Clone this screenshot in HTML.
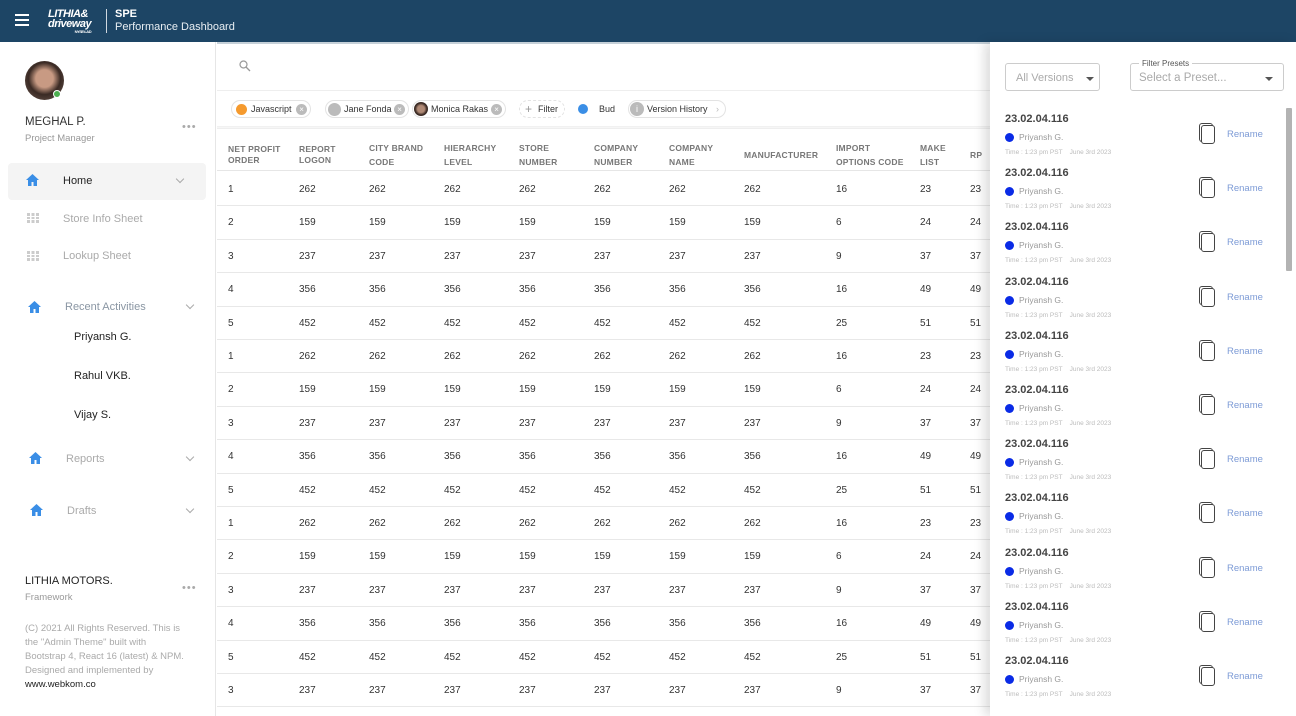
<!DOCTYPE html>
<html><head><meta charset="utf-8">
<style>
*{box-sizing:border-box;margin:0;padding:0}
body{width:1296px;height:716px;overflow:hidden;font-family:"Liberation Sans",Arial,sans-serif;background:#fff;position:relative;color:#333}
.hdr{position:absolute;left:0;top:0;width:1296px;height:42px;background:#1d4565;color:#fff}
.ham{position:absolute;left:15px;top:14px;width:14px}
.ham i{display:block;height:2px;background:#fff;margin-bottom:3px}
.logo{position:absolute;left:48px;top:9px;font-weight:bold;font-size:11px;line-height:10px;font-style:italic;letter-spacing:-.5px}
.logo small{display:block;font-size:4px;text-align:right;line-height:5px;font-style:normal}
.sep{position:absolute;left:106px;top:9px;width:1px;height:24px;background:#cfd8e0}
.spe{position:absolute;left:115px;top:8px;font-size:11px;font-weight:bold}
.pd{position:absolute;left:115px;top:21px;font-size:11px;color:#e8eef3}
.side{position:absolute;left:0;top:42px;width:216px;height:674px;border-right:1px solid #e6e6e6}
.av{position:absolute;left:25px;top:19px;width:39px;height:39px;border-radius:50%;background:radial-gradient(circle at 50% 45%,#c89a83 0 30%,#3a2a24 55%,#6e5a52 100%)}
.dot{position:absolute;left:53px;top:48px;width:8px;height:8px;border-radius:50%;background:#4caf50;border:1.5px solid #fff}
.t{position:absolute;white-space:nowrap}
.dots{position:absolute;color:#aaa;font-size:11px;letter-spacing:1px}
.home{position:absolute;left:8px;top:121px;width:198px;height:37px;background:#f4f4f4;border-radius:4px}
.hi{position:absolute;width:13px;height:12px}
.grid{position:absolute;width:12px;height:10px;background:
linear-gradient(90deg,#ccc 3px,transparent 3px 4.5px,#ccc 4.5px 7.5px,transparent 7.5px 9px,#ccc 9px);}
.grid:after{content:"";position:absolute;left:0;right:0;top:3px;height:1px;background:#fff;box-shadow:0 3px 0 #fff}
.chev{position:absolute;width:6px;height:6px;border-right:1.2px solid #aaa;border-bottom:1.2px solid #aaa;transform:rotate(45deg)}
.main{position:absolute;left:217px;top:42px;width:780px;height:674px}
.chip{position:absolute;top:58px;height:18px;border:1px solid #e3e3e3;border-radius:9px;font-size:9px;color:#333;line-height:16px}
.x{position:absolute;top:3px;width:11px;height:11px;border-radius:50%;background:#bbb;color:#fff;font-size:8px;line-height:11px;text-align:center}
.row{position:absolute;left:0;width:780px;height:33.4px;border-bottom:1px solid #e8e8e8;font-size:10px;color:#333;margin-top:2px}
.row span{position:absolute;top:0;line-height:33px}
.hrow{position:absolute;left:0;top:86px;width:780px;height:43px;border-bottom:1px solid #e6e6e6;border-top:1px solid #eee;font-size:8.5px;font-weight:bold;color:#777;letter-spacing:.2px}
.hrow span{position:absolute;line-height:14px;top:12px}
.hrow span.tt{line-height:11px;top:15px}
.hrow span.one{top:19px}
.c1{left:11px}.c2{left:82px}.c3{left:152px}.c4{left:227px}.c5{left:302px}.c6{left:377px}.c7{left:452px}.c8{left:527px}.c9{left:619px}.c10{left:703px}.c11{left:753px}
.panel{position:absolute;left:990px;top:42px;width:306px;height:674px;background:#fff;box-shadow:-6px 0 10px rgba(0,0,0,.13)}
.sel{position:absolute;border:1px solid #ccc;border-radius:3px;height:28px;font-size:11px;color:#aaa}
.tri{position:absolute;width:0;height:0;border-left:4px solid transparent;border-right:4px solid transparent;border-top:4px solid #555}
.it{position:absolute;left:0;width:290px;height:54px}
.it .v{position:absolute;left:15px;top:0;font-size:11px;font-weight:bold;color:#444}
.it .b{position:absolute;left:15px;top:20px;width:9px;height:9px;border-radius:50%;background:#0a2be6}
.it .n{position:absolute;left:29px;top:19px;font-size:8.5px;color:#999}
.it .tm{position:absolute;left:15px;top:36px;font-size:6.5px;color:#bbb}
.it .cp{position:absolute;left:211px;top:12px;width:14px;height:19px;border:1px solid #444;border-radius:3px;background:#fff;box-shadow:-2px -2px 0 -1px #fff,-2px -2px 0 0 #444}
.it .rn{position:absolute;left:237px;top:16px;font-size:9.5px;color:#7d9bd6}
.sb{position:absolute;left:1286px;top:108px;width:6px;height:163px;background:#b3b3b3;border-radius:1px}
</style></head><body>
<div class="hdr">
<div class="ham"><i></i><i></i><i></i></div>
<div class="logo">LITHIA&amp;<br>driveway<small>NYSE:LAD</small></div>
<div class="sep"></div>
<div class="spe">SPE</div>
<div class="pd">Performance Dashboard</div>
</div>

<div class="side">
<div class="av"></div><div class="dot"></div>
<div class="t" style="left:25px;top:74px;font-size:11.5px;color:#333">MEGHAL P.</div>
<div class="t" style="left:25px;top:91px;font-size:9.5px;color:#999">Project Manager</div>
<div class="dots" style="left:182px;top:79px">•••</div>
<div class="home"></div>
<svg class="hi" style="left:26px;top:132px" viewBox="0 0 13 12"><path d="M6.5 0L0 6h2v6h3.5V8h2v4H11V6h2z" fill="#3a8ee6"/></svg>
<div class="t" style="left:63px;top:133px;font-size:11px;color:#222">Home</div>
<div class="chev" style="left:177px;top:134px"></div>
<div class="grid" style="left:27px;top:171px"></div>
<div class="t" style="left:63px;top:171px;font-size:11px;color:#aaa">Store Info Sheet</div>
<div class="grid" style="left:27px;top:209px"></div>
<div class="t" style="left:63px;top:208px;font-size:11px;color:#aaa">Lookup Sheet</div>
<svg class="hi" style="left:28px;top:259px" viewBox="0 0 13 12"><path d="M6.5 0L0 6h2v6h3.5V8h2v4H11V6h2z" fill="#3a8ee6"/></svg>
<div class="t" style="left:65px;top:259px;font-size:11px;color:#8a96a3">Recent Activities</div>
<div class="chev" style="left:187px;top:260px"></div>
<div class="t" style="left:74px;top:289px;font-size:11px;color:#222">Priyansh G.</div>
<div class="t" style="left:74px;top:328px;font-size:11px;color:#222">Rahul VKB.</div>
<div class="t" style="left:74px;top:367px;font-size:11px;color:#222">Vijay S.</div>
<svg class="hi" style="left:29px;top:410px" viewBox="0 0 13 12"><path d="M6.5 0L0 6h2v6h3.5V8h2v4H11V6h2z" fill="#3a8ee6"/></svg>
<div class="t" style="left:66px;top:411px;font-size:11px;color:#aaa">Reports</div>
<div class="chev" style="left:187px;top:412px"></div>
<svg class="hi" style="left:30px;top:462px" viewBox="0 0 13 12"><path d="M6.5 0L0 6h2v6h3.5V8h2v4H11V6h2z" fill="#3a8ee6"/></svg>
<div class="t" style="left:67px;top:463px;font-size:11px;color:#aaa">Drafts</div>
<div class="chev" style="left:187px;top:464px"></div>
<div class="t" style="left:25px;top:533px;font-size:11px;color:#222">LITHIA MOTORS.</div>
<div class="t" style="left:25px;top:550px;font-size:9.5px;color:#999">Framework</div>
<div class="dots" style="left:182px;top:540px">•••</div>
<div class="t" style="left:25px;top:580px;font-size:9.5px;color:#aaa;line-height:14px">(C) 2021 All Rights Reserved. This is<br>the "Admin Theme" built with<br>Bootstrap 4, React 16 (latest) &amp; NPM.<br>Designed and implemented by<br><span style="color:#222">www.webkom.co</span></div>
</div>

<div class="main">
<div style="position:absolute;left:0;top:0;width:780px;height:2px;background:#c5d0d8"></div>
<svg style="position:absolute;left:22px;top:18px" width="12" height="12" viewBox="0 0 12 12"><circle cx="4.5" cy="4.5" r="3.5" fill="none" stroke="#999" stroke-width="1.2"/><path d="M7 7l4 4" stroke="#999" stroke-width="1.3"/></svg>
<div style="position:absolute;left:0;top:48px;width:780px;height:1px;background:#eee"></div>
<div class="chip" style="left:14px;width:80px"><i style="position:absolute;left:4px;top:3px;width:11px;height:11px;border-radius:50%;background:#f59a2e"></i><span style="position:absolute;left:19px">Javascript</span><i class="x" style="left:64px">×</i></div>
<div class="chip" style="left:108px;width:84px"><i style="position:absolute;left:2px;top:2px;width:13px;height:13px;border-radius:50%;background:#bbb"></i><span style="position:absolute;left:18px">Jane Fonda</span><i class="x" style="left:68px">×</i></div>
<div class="chip" style="left:195px;width:94px"><i style="position:absolute;left:1px;top:1px;width:14px;height:14px;border-radius:50%;background:radial-gradient(circle,#b08a76 0 35%,#3a2a24 60%)"></i><span style="position:absolute;left:18px">Monica Rakas</span><i class="x" style="left:78px">×</i></div>
<div class="chip" style="left:302px;width:46px;border-style:dashed"><span style="position:absolute;left:5px;color:#999;font-size:12px">+</span><span style="position:absolute;left:18px">Filter</span></div>
<i style="position:absolute;left:361px;top:62px;width:10px;height:10px;border-radius:50%;background:#3a8ee6"></i>
<div class="t" style="left:382px;top:62px;font-size:9px">Bud</div>
<div class="chip" style="left:411px;width:98px"><i style="position:absolute;left:1px;top:1px;width:14px;height:14px;border-radius:50%;background:#bbb;color:#fff;font-size:9px;text-align:center;line-height:14px;font-style:normal">i</i><span style="position:absolute;left:18px">Version History</span><span style="position:absolute;left:87px;color:#bbb">›</span></div>
<div style="position:absolute;left:0;top:84px;width:780px;height:3px;background:linear-gradient(#eee,#fff)"></div>
<div class="hrow"><span class="c1 tt">NET PROFIT<br>ORDER</span><span class="c2 tt">REPORT<br>LOGON</span><span class="c3">CITY BRAND<br>CODE</span><span class="c4">HIERARCHY<br>LEVEL</span><span class="c5">STORE<br>NUMBER</span><span class="c6">COMPANY<br>NUMBER</span><span class="c7">COMPANY<br>NAME</span><span class="c8 one">MANUFACTURER</span><span class="c9">IMPORT<br>OPTIONS CODE</span><span class="c10">MAKE<br>LIST</span><span class="c11 one">RP</span></div>
<div class="row" style="top:129px"><span class="c1">1</span><span class="c2">262</span><span class="c3">262</span><span class="c4">262</span><span class="c5">262</span><span class="c6">262</span><span class="c7">262</span><span class="c8">262</span><span class="c9">16</span><span class="c10">23</span><span class="c11">23</span></div>
<div class="row" style="top:162.4px"><span class="c1">2</span><span class="c2">159</span><span class="c3">159</span><span class="c4">159</span><span class="c5">159</span><span class="c6">159</span><span class="c7">159</span><span class="c8">159</span><span class="c9">6</span><span class="c10">24</span><span class="c11">24</span></div>
<div class="row" style="top:195.8px"><span class="c1">3</span><span class="c2">237</span><span class="c3">237</span><span class="c4">237</span><span class="c5">237</span><span class="c6">237</span><span class="c7">237</span><span class="c8">237</span><span class="c9">9</span><span class="c10">37</span><span class="c11">37</span></div>
<div class="row" style="top:229.2px"><span class="c1">4</span><span class="c2">356</span><span class="c3">356</span><span class="c4">356</span><span class="c5">356</span><span class="c6">356</span><span class="c7">356</span><span class="c8">356</span><span class="c9">16</span><span class="c10">49</span><span class="c11">49</span></div>
<div class="row" style="top:262.6px"><span class="c1">5</span><span class="c2">452</span><span class="c3">452</span><span class="c4">452</span><span class="c5">452</span><span class="c6">452</span><span class="c7">452</span><span class="c8">452</span><span class="c9">25</span><span class="c10">51</span><span class="c11">51</span></div>
<div class="row" style="top:296px"><span class="c1">1</span><span class="c2">262</span><span class="c3">262</span><span class="c4">262</span><span class="c5">262</span><span class="c6">262</span><span class="c7">262</span><span class="c8">262</span><span class="c9">16</span><span class="c10">23</span><span class="c11">23</span></div>
<div class="row" style="top:329.4px"><span class="c1">2</span><span class="c2">159</span><span class="c3">159</span><span class="c4">159</span><span class="c5">159</span><span class="c6">159</span><span class="c7">159</span><span class="c8">159</span><span class="c9">6</span><span class="c10">24</span><span class="c11">24</span></div>
<div class="row" style="top:362.8px"><span class="c1">3</span><span class="c2">237</span><span class="c3">237</span><span class="c4">237</span><span class="c5">237</span><span class="c6">237</span><span class="c7">237</span><span class="c8">237</span><span class="c9">9</span><span class="c10">37</span><span class="c11">37</span></div>
<div class="row" style="top:396.2px"><span class="c1">4</span><span class="c2">356</span><span class="c3">356</span><span class="c4">356</span><span class="c5">356</span><span class="c6">356</span><span class="c7">356</span><span class="c8">356</span><span class="c9">16</span><span class="c10">49</span><span class="c11">49</span></div>
<div class="row" style="top:429.6px"><span class="c1">5</span><span class="c2">452</span><span class="c3">452</span><span class="c4">452</span><span class="c5">452</span><span class="c6">452</span><span class="c7">452</span><span class="c8">452</span><span class="c9">25</span><span class="c10">51</span><span class="c11">51</span></div>
<div class="row" style="top:463px"><span class="c1">1</span><span class="c2">262</span><span class="c3">262</span><span class="c4">262</span><span class="c5">262</span><span class="c6">262</span><span class="c7">262</span><span class="c8">262</span><span class="c9">16</span><span class="c10">23</span><span class="c11">23</span></div>
<div class="row" style="top:496.4px"><span class="c1">2</span><span class="c2">159</span><span class="c3">159</span><span class="c4">159</span><span class="c5">159</span><span class="c6">159</span><span class="c7">159</span><span class="c8">159</span><span class="c9">6</span><span class="c10">24</span><span class="c11">24</span></div>
<div class="row" style="top:529.8px"><span class="c1">3</span><span class="c2">237</span><span class="c3">237</span><span class="c4">237</span><span class="c5">237</span><span class="c6">237</span><span class="c7">237</span><span class="c8">237</span><span class="c9">9</span><span class="c10">37</span><span class="c11">37</span></div>
<div class="row" style="top:563.2px"><span class="c1">4</span><span class="c2">356</span><span class="c3">356</span><span class="c4">356</span><span class="c5">356</span><span class="c6">356</span><span class="c7">356</span><span class="c8">356</span><span class="c9">16</span><span class="c10">49</span><span class="c11">49</span></div>
<div class="row" style="top:596.6px"><span class="c1">5</span><span class="c2">452</span><span class="c3">452</span><span class="c4">452</span><span class="c5">452</span><span class="c6">452</span><span class="c7">452</span><span class="c8">452</span><span class="c9">25</span><span class="c10">51</span><span class="c11">51</span></div>
<div class="row" style="top:630px"><span class="c1">3</span><span class="c2">237</span><span class="c3">237</span><span class="c4">237</span><span class="c5">237</span><span class="c6">237</span><span class="c7">237</span><span class="c8">237</span><span class="c9">9</span><span class="c10">37</span><span class="c11">37</span></div>
</div>

<div class="panel">
<div class="sel" style="left:15px;top:21px;width:95px"><span style="position:absolute;left:10px;top:8px">All Versions</span><i class="tri" style="left:80px;top:13px"></i></div>
<div class="sel" style="left:140px;top:21px;width:154px"><span style="position:absolute;left:8px;top:-5px;background:#fff;padding:0 3px;font-size:8px;color:#555">Filter Presets</span><span style="position:absolute;left:8px;top:8px;font-size:11.5px">Select a Preset...</span><i class="tri" style="left:134px;top:13px"></i></div>
<div class="it" style="top:71px"><div class="v">23.02.04.116</div><i class="b"></i><div class="n">Priyansh G.</div><div class="tm">Time : 1:23 pm PST &nbsp;&nbsp; June 3rd 2023</div><i class="cp"></i><div class="rn">Rename</div></div>
<div class="it" style="top:125.2px"><div class="v">23.02.04.116</div><i class="b"></i><div class="n">Priyansh G.</div><div class="tm">Time : 1:23 pm PST &nbsp;&nbsp; June 3rd 2023</div><i class="cp"></i><div class="rn">Rename</div></div>
<div class="it" style="top:179.4px"><div class="v">23.02.04.116</div><i class="b"></i><div class="n">Priyansh G.</div><div class="tm">Time : 1:23 pm PST &nbsp;&nbsp; June 3rd 2023</div><i class="cp"></i><div class="rn">Rename</div></div>
<div class="it" style="top:233.6px"><div class="v">23.02.04.116</div><i class="b"></i><div class="n">Priyansh G.</div><div class="tm">Time : 1:23 pm PST &nbsp;&nbsp; June 3rd 2023</div><i class="cp"></i><div class="rn">Rename</div></div>
<div class="it" style="top:287.8px"><div class="v">23.02.04.116</div><i class="b"></i><div class="n">Priyansh G.</div><div class="tm">Time : 1:23 pm PST &nbsp;&nbsp; June 3rd 2023</div><i class="cp"></i><div class="rn">Rename</div></div>
<div class="it" style="top:342px"><div class="v">23.02.04.116</div><i class="b"></i><div class="n">Priyansh G.</div><div class="tm">Time : 1:23 pm PST &nbsp;&nbsp; June 3rd 2023</div><i class="cp"></i><div class="rn">Rename</div></div>
<div class="it" style="top:396.2px"><div class="v">23.02.04.116</div><i class="b"></i><div class="n">Priyansh G.</div><div class="tm">Time : 1:23 pm PST &nbsp;&nbsp; June 3rd 2023</div><i class="cp"></i><div class="rn">Rename</div></div>
<div class="it" style="top:450.4px"><div class="v">23.02.04.116</div><i class="b"></i><div class="n">Priyansh G.</div><div class="tm">Time : 1:23 pm PST &nbsp;&nbsp; June 3rd 2023</div><i class="cp"></i><div class="rn">Rename</div></div>
<div class="it" style="top:504.6px"><div class="v">23.02.04.116</div><i class="b"></i><div class="n">Priyansh G.</div><div class="tm">Time : 1:23 pm PST &nbsp;&nbsp; June 3rd 2023</div><i class="cp"></i><div class="rn">Rename</div></div>
<div class="it" style="top:558.8px"><div class="v">23.02.04.116</div><i class="b"></i><div class="n">Priyansh G.</div><div class="tm">Time : 1:23 pm PST &nbsp;&nbsp; June 3rd 2023</div><i class="cp"></i><div class="rn">Rename</div></div>
<div class="it" style="top:613px"><div class="v">23.02.04.116</div><i class="b"></i><div class="n">Priyansh G.</div><div class="tm">Time : 1:23 pm PST &nbsp;&nbsp; June 3rd 2023</div><i class="cp"></i><div class="rn">Rename</div></div>
</div>
<div class="sb"></div>
</body></html>
